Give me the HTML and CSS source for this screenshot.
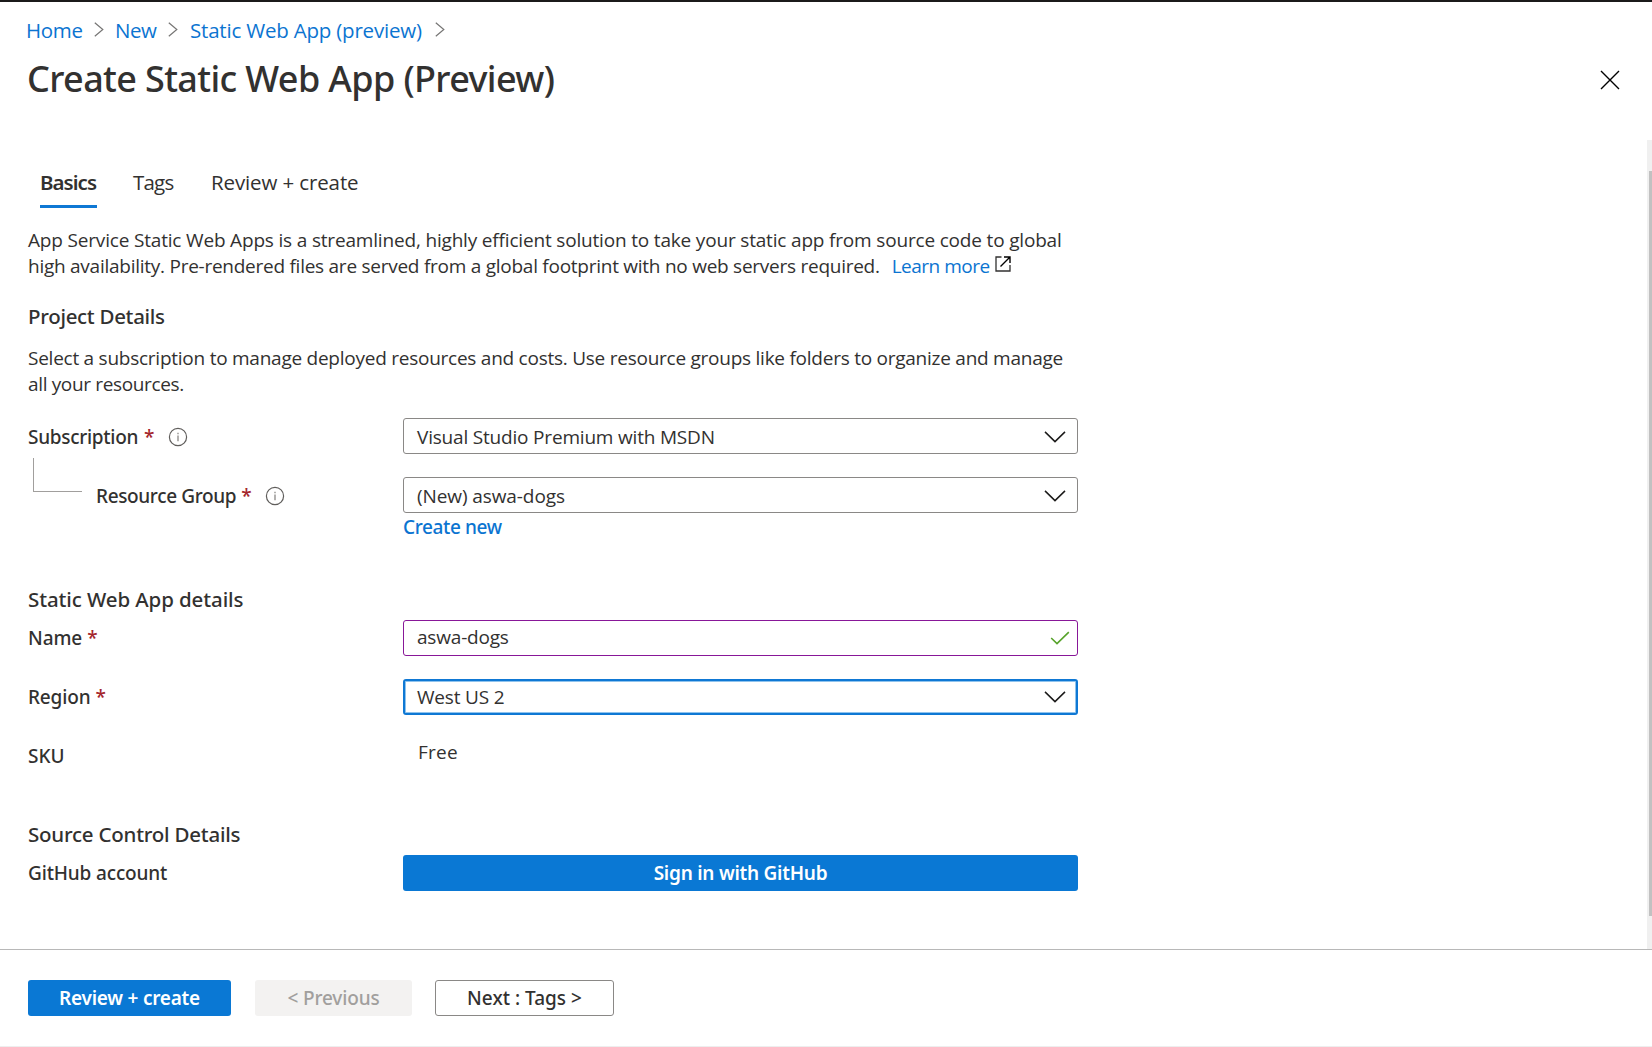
FILE: index.html
```html
<!DOCTYPE html>
<html lang="en">
<head>
<meta charset="utf-8">
<title>Create Static Web App (Preview)</title>
<link rel="stylesheet" href="styles.css">
</head>
<body>
<svg width="0" height="0" class="defs" aria-hidden="true">
  <symbol id="sep" viewBox="0 0 10 15"><path d="M.8.8 8.8 7.5.8 14.2" fill="none" stroke="#767574" stroke-width="1.2"/></symbol>
  <symbol id="down" viewBox="0 0 22 12"><path d="M1 .9 11 10.6 21 .9" fill="none" stroke="#1b1a19" stroke-width="1.5"/></symbol>
  <symbol id="info" viewBox="0 0 20 20"><circle cx="10" cy="10" r="8.6" fill="none" stroke="#605e5c" stroke-width="1.2"/><path d="M10 8.6v5.6M10 5.7v1.5" fill="none" stroke="#8a8886" stroke-width="1.3"/></symbol>
</svg>
<div class="page">
  <header class="header">
    <nav class="crumbs">
      <a class="crumb-home">Home</a><svg class="sep"><use href="#sep"/></svg>
      <a class="crumb-new">New</a><svg class="sep"><use href="#sep"/></svg>
      <a class="crumb-app">Static Web App (preview)</a><svg class="sep"><use href="#sep"/></svg>
    </nav>
    <div class="titlebar">
      <h1>Create Static Web App (Preview)</h1>
      <svg class="close" viewBox="0 0 20 20"><path d="M1 1l18 18M19 1 1 19" fill="none" stroke="#000" stroke-width="1.4"/></svg>
    </div>
  </header>
  <div class="scroll">
    <main class="content">
      <div class="tabs">
        <div class="tab tab-active">Basics</div>
        <div class="tab tab-tags">Tags</div>
        <div class="tab tab-review">Review + create</div>
      </div>
      <p class="intro"><span class="intro-a">App Service Static Web Apps is a streamlined, highly efficient solution to take your static app from source code to global</span><br><span class="intro-b">high availability. Pre-rendered files are served from a global footprint with no web servers required.</span><a class="learn">Learn more</a><svg class="external" viewBox="0 0 16 16"><path d="M6.5 1H1v14h14V9" fill="none" stroke="#323130" stroke-width="1.3"/><path d="M9 1h6v6M15 1 5.5 10.5" fill="none" stroke="#000" stroke-width="1.4"/></svg></p>
      <h2 class="h-project">Project Details</h2>
      <p class="project-text">Select a subscription to manage deployed resources and costs. Use resource groups like folders to organize and manage<br><span class="project-end">all your resources.</span></p>

      <div class="row">
        <div class="label"><span class="l-sub">Subscription</span><span class="req">*</span><svg class="info"><use href="#info"/></svg></div>
        <div class="field">Visual Studio Premium with MSDN<svg class="down"><use href="#down"/></svg></div>
      </div>
      <div class="row">
        <div class="label"><i class="branch"></i><span class="l-group">Resource Group</span><span class="req">*</span><svg class="info"><use href="#info"/></svg></div>
        <div class="field"><span class="v-group">(New) aswa-dogs</span><svg class="down"><use href="#down"/></svg></div>
      </div>
      <a class="create-new">Create new</a>

      <h2 class="h-app">Static Web App details</h2>
      <div class="row row-detail">
        <div class="label"><span class="l-name">Name</span><span class="req">*</span></div>
        <div class="field field-edited"><span>aswa-dogs</span><svg class="check" viewBox="0 0 20 14"><path d="M1.2 7 7 12.6 18.8 1.2" fill="none" stroke="#57a32b" stroke-width="1.6"/></svg></div>
      </div>
      <div class="row row-detail">
        <div class="label"><span class="l-region">Region</span><span class="req">*</span></div>
        <div class="field field-focus">West US 2<svg class="down"><use href="#down"/></svg></div>
      </div>
      <div class="row row-detail">
        <div class="label"><span>SKU</span></div>
        <div class="static">Free</div>
      </div>

      <h2 class="h-source">Source Control Details</h2>
      <div class="row row-detail">
        <div class="label"><span class="l-github">GitHub account</span></div>
        <button class="btn btn-primary btn-github">Sign in with GitHub</button>
      </div>
    </main>
    <div class="scrollbar"><div class="thumb"></div></div>
  </div>
  <footer class="footer">
    <button class="btn btn-primary btn-review">Review + create</button>
    <button class="btn btn-disabled">&lt; Previous</button>
    <button class="btn btn-next">Next : Tags &gt;</button>
  </footer>
</div>
</body>
</html>
```
FILE: styles.css
```css
* { box-sizing: border-box; }
body { margin: 0; background: #fff; color: #323130; font: 400 19px/26px "Open Sans", "Noto Sans", sans-serif; }
h1, h2, p { margin: 0; }
a { color: #0b74d1; text-decoration: none; }
svg { flex: none; }
.defs { position: absolute; }

.page { display: flex; flex-direction: column; width: 1652px; height: 1047px; overflow: hidden; border-top: 2px solid #1b1a1a; border-bottom: 1px solid #eee; white-space: nowrap; }

.header { height: 138px; padding: 14px 0 0 26px; }
.crumbs { display: flex; height: 28px; font-size: 20.5px; line-height: 28px; }
.crumb-home { width: 68px; letter-spacing: -.3px; }
.crumb-new { width: 53px; margin-left: 11px; letter-spacing: -.47px; }
.crumb-app { width: 245px; margin-left: 12px; letter-spacing: -.2px; }
.sep { width: 10px; height: 15px; margin-top: 6px; }
.titlebar { display: flex; justify-content: space-between; padding-right: 32px; margin-top: 8px; }
h1 { font: 500 36px/54px "Noto Sans", sans-serif; letter-spacing: -.63px; margin-left: 1px; }
.close { width: 20px; height: 20px; margin-top: 18px; }

.scroll { display: flex; justify-content: space-between; height: 809px; }
.content { width: 1110px; padding: 28px 0 0 28px; }
.scrollbar { width: 5px; padding: 31px 0 0 2px; background: #f0f0f0; }
.thumb { height: 745px; background: #c1c1c1; }

.tabs { display: flex; gap: 36px; padding-left: 12px; font-size: 20.5px; line-height: 28px; height: 40px; }
.tab-active { width: 57px; font-family: "Noto Sans", sans-serif; font-weight: 600; letter-spacing: -.95px; border-bottom: 3px solid #0f78d4; }
.tab-tags { width: 42px; letter-spacing: -.8px; }
.tab-review { letter-spacing: -.12px; }

.intro { margin-top: 19px; }
.intro-a { letter-spacing: -.176px; }
.intro-b { letter-spacing: -.257px; }
.learn { margin-left: 12px; letter-spacing: -.5px; }
.external { width: 16px; height: 16px; margin-left: 5px; vertical-align: 1px; margin-top: -4px; }
h2 { font: 500 20.5px/28px "Noto Sans", sans-serif; }
.h-project { margin-top: 23px; letter-spacing: -.3px; }
.project-text { margin-top: 15px; letter-spacing: -.249px; }
.project-end { letter-spacing: -.35px; }
.project-text + .row { margin-top: 21px; }

.row { display: grid; grid-template: 36px / 375px 675px; height: 36px; margin-bottom: 23px; }
.label { display: flex; height: 38px; line-height: 38px; font-family: "Noto Sans", sans-serif; font-weight: 500; }
.row-detail .label { height: 36px; line-height: 36px; }
.l-sub { letter-spacing: -.29px; }
.l-group { letter-spacing: -.36px; }
.l-github { letter-spacing: -.15px; }
.l-name { letter-spacing: -.1px; }
.l-region { letter-spacing: -.15px; }
.req { margin-left: 6px; color: #a4262c; }
.l-group + .req, .l-name + .req, .l-region + .req { margin-left: 5px; }
.info { width: 20px; height: 20px; margin: 9px 0 0 13px; }
.branch { width: 49px; height: 34px; margin: -19px 14px 0 5px; border: solid #a19f9d; border-width: 0 0 1px 1px; }
.field { display: flex; justify-content: space-between; padding: 1px 21px 0 13px; border: 1px solid #8a8886; border-radius: 3px; line-height: 34px; letter-spacing: -.19px; }
.v-group { letter-spacing: -.09px; }
.down { width: 22px; height: 12px; margin: 11px -10px 0 0; }
.field-edited { padding-top: 0; line-height: 32px; border-color: #881798; }
.check { width: 20px; height: 14px; margin: 10px -14px 0 0; }
.field-focus { border: 2px solid #0f78d4; padding: 0 20px 0 12px; line-height: 33px; box-shadow: inset 0 0 0 1px #8fc3ed; }
.field-focus .down { margin-top: 10px; }
.static { padding-left: 15px; line-height: 28px; letter-spacing: .25px; }
.create-new { display: block; width: 110px; margin: -22px 0 0 375px; font: 500 19px/26px "Noto Sans", sans-serif; letter-spacing: -.37px; }
.h-app { margin: 45px 0 7px; letter-spacing: -.1px; }
.h-source { margin: 46px 0 7px; letter-spacing: -.23px; }

.btn { height: 36px; padding: 0; border: 1px solid transparent; border-radius: 3px; font: 500 19px/34px "Noto Sans", sans-serif; text-align: center; }
.btn-primary { background: #0a78d4; color: #fff; font-weight: 600; }
.btn-github { letter-spacing: -.25px; }
.footer { display: flex; height: 97px; padding: 30px 28px 0; border-top: 1px solid #b8b8b8; }
.btn-review { width: 203px; letter-spacing: -.23px; }
.btn-disabled { width: 157px; margin-left: 24px; background: #f3f2f1; color: #a19f9d; letter-spacing: -.14px; }
.btn-next { width: 179px; margin-left: 23px; background: #fff; border-color: #8a8886; color: #323130; }
```
